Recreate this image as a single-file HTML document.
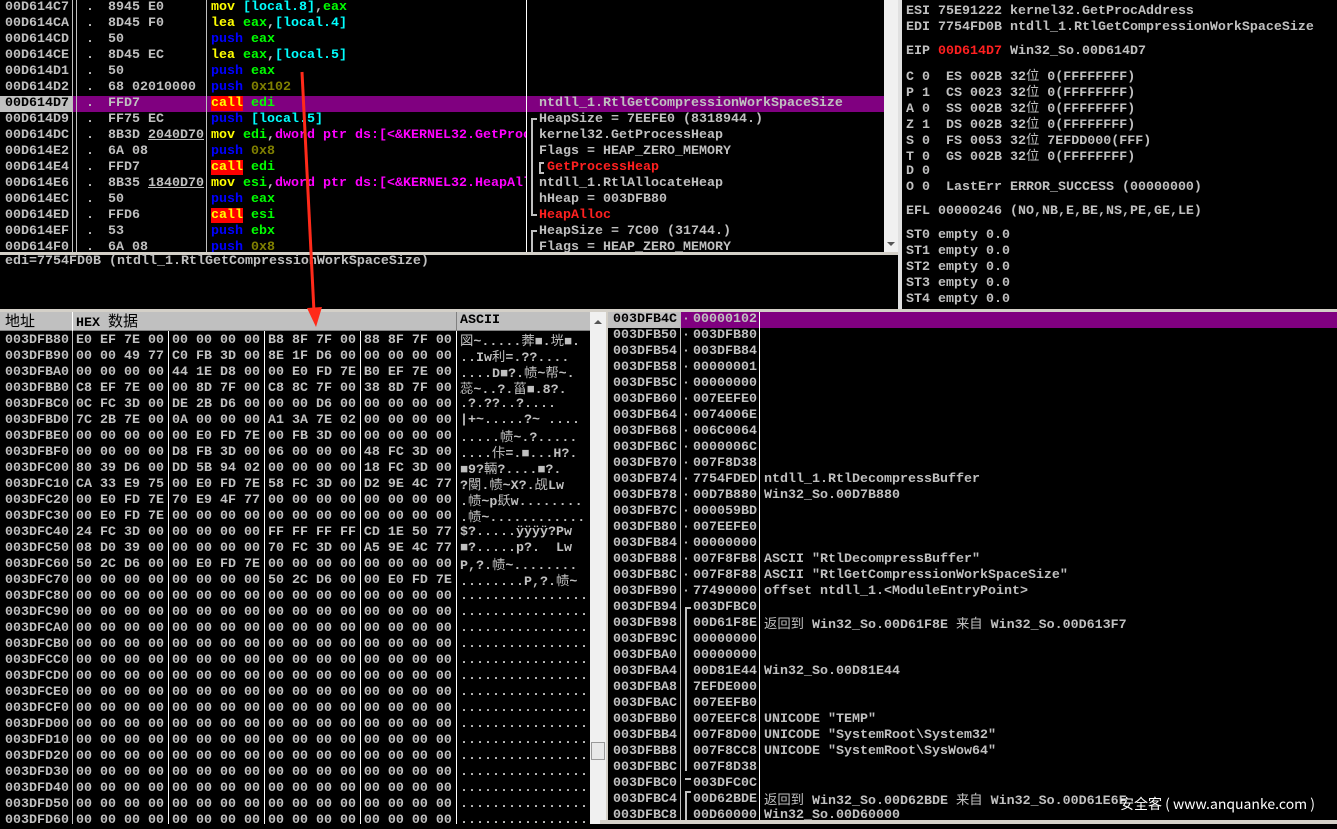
<!DOCTYPE html>
<html><head><meta charset="utf-8"><style>
*{margin:0;padding:0;box-sizing:border-box}
body{width:1337px;height:824px;background:#000;overflow:hidden;position:relative;font-family:"Liberation Mono","Noto Sans CJK SC",monospace;font-weight:bold;font-size:13.33px;color:#c0c0c0}
.a{position:absolute;white-space:pre;line-height:16px}
.a.L{white-space:normal}
.a>div{height:16px;line-height:16px;white-space:pre;overflow:visible}
.v{position:absolute;background:#c0c0c0;width:1px}
.y{color:#ffff00}.b{color:#0000ff}.g{color:#00ff00}.c{color:#00ffff}.o{color:#808000}.m{color:#ff00ff}.rd{color:#ff2020}
.call{background:#ff0000;color:#ffff00}
.cj{font-family:"Noto Sans CJK SC",sans-serif;font-weight:normal;line-height:1}
</style></head><body>

<div class="a" style="left:0;top:96px;width:884px;height:16px;background:#800080"></div>
<div class="a" style="left:0;top:96px;width:72px;height:16px;background:#c0c0c0"></div>
<div class="v" style="left:72px;top:0;height:252px"></div>
<div class="v" style="left:76px;top:0;height:252px"></div>
<div class="v" style="left:206px;top:0;height:252px"></div>
<div class="v" style="left:526px;top:0;height:252px;background:#fff"></div>
<div class="a" style="left:5px;top:0">00D614C7
00D614CA
00D614CD
00D614CE
00D614D1
00D614D2
<span style="color:#000">00D614D7</span>
00D614D9
00D614DC
00D614E2
00D614E4
00D614E6
00D614EC
00D614ED
00D614EF
00D614F0</div>
<div class="a" style="left:86px;top:0">.
.
.
.
.
.
.
.
.
.
.
.
.
.
.
.</div>
<div class="a" style="left:108px;top:0">8945 E0
8D45 F0
50
8D45 EC
50
68 02010000
FFD7
FF75 EC
8B3D <u>2040D70</u>
6A 08
FFD7
8B35 <u>1840D70</u>
50
FFD6
53
6A 08</div>
<div class="a" style="left:211px;top:0;width:315px;overflow:hidden"><span class="y">mov</span> <span class="c">[local.8]</span>,<span class="g">eax</span>
<span class="y">lea</span> <span class="g">eax</span>,<span class="c">[local.4]</span>
<span class="b">push</span> <span class="g">eax</span>
<span class="y">lea</span> <span class="g">eax</span>,<span class="c">[local.5]</span>
<span class="b">push</span> <span class="g">eax</span>
<span class="b">push</span> <span class="o">0x102</span>
<span class="call">call</span> <span class="g">edi</span>
<span class="b">push</span> <span class="c">[local.5]</span>
<span class="y">mov</span> <span class="g">edi</span>,<span class="m">dword ptr ds:[&lt;&amp;KERNEL32.GetProcessHeap</span>
<span class="b">push</span> <span class="o">0x8</span>
<span class="call">call</span> <span class="g">edi</span>
<span class="y">mov</span> <span class="g">esi</span>,<span class="m">dword ptr ds:[&lt;&amp;KERNEL32.HeapAlloc</span>
<span class="b">push</span> <span class="g">eax</span>
<span class="call">call</span> <span class="g">esi</span>
<span class="b">push</span> <span class="g">ebx</span>
<span class="b">push</span> <span class="o">0x8</span></div>
<div class="a" style="left:539px;top:96px">ntdll_1.RtlGetCompressionWorkSpaceSize
HeapSize = 7EEFE0 (8318944.)
kernel32.GetProcessHeap
Flags = HEAP_ZERO_MEMORY
 <span class="rd">GetProcessHeap</span>
ntdll_1.RtlAllocateHeap
hHeap = 003DFB80
<span class="rd">HeapAlloc</span>
HeapSize = 7C00 (31744.)
Flags = HEAP_ZERO_MEMORY</div>
<div class="a" style="left:531px;top:118px;width:6px;height:98px;border-left:2px solid #c0c0c0;border-top:2px solid #c0c0c0;border-bottom:2px solid #c0c0c0"></div>
<div class="a" style="left:539px;top:162px;width:5px;height:12px;border:2px solid #c0c0c0;border-right:none"></div>
<div class="a" style="left:531px;top:230px;width:6px;height:22px;border-left:2px solid #c0c0c0;border-top:2px solid #c0c0c0"></div>
<div class="a" style="left:884px;top:0;width:14px;height:252px;background:#f0f0f0"></div>
<div class="a" style="left:887px;top:242px;width:0;height:0;border-left:4px solid transparent;border-right:4px solid transparent;border-top:4px solid #555"></div>
<div class="a" style="left:0;top:252px;width:900px;height:3px;background:#d4d0c8"></div>
<div class="a" style="left:5px;top:254px">edi=7754FD0B (ntdll_1.RtlGetCompressionWorkSpaceSize)</div>

<div class="a" style="left:898px;top:0;width:4px;height:310px;background:#e0e0e0"></div>
<div class="a" style="left:906px;top:4px">ESI 75E91222 kernel32.GetProcAddress
EDI 7754FD0B ntdll_1.RtlGetCompressionWorkSpaceSize</div>
<div class="a" style="left:906px;top:44px">EIP <span class="rd">00D614D7</span> Win32_So.00D614D7</div>
<div class="a L" style="left:906px;top:68px"><div>C 0  ES 002B 32<span class="cj">位</span> 0(FFFFFFFF)</div><div>P 1  CS 0023 32<span class="cj">位</span> 0(FFFFFFFF)</div><div>A 0  SS 002B 32<span class="cj">位</span> 0(FFFFFFFF)</div><div>Z 1  DS 002B 32<span class="cj">位</span> 0(FFFFFFFF)</div><div>S 0  FS 0053 32<span class="cj">位</span> 7EFDD000(FFF)</div><div>T 0  GS 002B 32<span class="cj">位</span> 0(FFFFFFFF)</div><div>D 0</div><div>O 0  LastErr ERROR_SUCCESS (00000000)</div></div>
<div class="a" style="left:906px;top:204px">EFL 00000246 (NO,NB,E,BE,NS,PE,GE,LE)</div>
<div class="a" style="left:906px;top:228px">ST0 empty 0.0
ST1 empty 0.0
ST2 empty 0.0
ST3 empty 0.0
ST4 empty 0.0</div>

<div class="a" style="left:0;top:309px;width:1337px;height:3px;background:#d4d0c8"></div>

<div class="a" style="left:0;top:312px;width:590px;height:19px;background:#c0c0c0;border-bottom:1px solid #808080"></div>
<div class="a L" style="left:5px;top:313px;color:#000"><div><span class="cj" style="font-size:15px">地址</span></div></div>
<div class="a L" style="left:76px;top:313px;color:#000"><div>HEX <span class="cj" style="font-size:15px">数据</span></div></div>
<div class="a" style="left:460px;top:313px;color:#000">ASCII</div>
<div class="v" style="left:72px;top:312px;height:19px;background:#fff"></div>
<div class="v" style="left:456px;top:312px;height:19px;background:#808080"></div>
<div class="v" style="left:72px;top:331px;height:493px"></div>
<div class="v" style="left:168px;top:331px;height:493px;background:#fff"></div>
<div class="v" style="left:264px;top:331px;height:493px;background:#fff"></div>
<div class="v" style="left:360px;top:331px;height:493px;background:#fff"></div>
<div class="v" style="left:456px;top:331px;height:493px;background:#fff"></div>
<div class="a" style="left:5px;top:333px">003DFB80
003DFB90
003DFBA0
003DFBB0
003DFBC0
003DFBD0
003DFBE0
003DFBF0
003DFC00
003DFC10
003DFC20
003DFC30
003DFC40
003DFC50
003DFC60
003DFC70
003DFC80
003DFC90
003DFCA0
003DFCB0
003DFCC0
003DFCD0
003DFCE0
003DFCF0
003DFD00
003DFD10
003DFD20
003DFD30
003DFD40
003DFD50
003DFD60</div>
<div class="a" style="left:76px;top:333px">E0 EF 7E 00 00 00 00 00 B8 8F 7F 00 88 8F 7F 00
00 00 49 77 C0 FB 3D 00 8E 1F D6 00 00 00 00 00
00 00 00 00 44 1E D8 00 00 E0 FD 7E B0 EF 7E 00
C8 EF 7E 00 00 8D 7F 00 C8 8C 7F 00 38 8D 7F 00
0C FC 3D 00 DE 2B D6 00 00 00 D6 00 00 00 00 00
7C 2B 7E 00 0A 00 00 00 A1 3A 7E 02 00 00 00 00
00 00 00 00 00 E0 FD 7E 00 FB 3D 00 00 00 00 00
00 00 00 00 D8 FB 3D 00 06 00 00 00 48 FC 3D 00
80 39 D6 00 DD 5B 94 02 00 00 00 00 18 FC 3D 00
CA 33 E9 75 00 E0 FD 7E 58 FC 3D 00 D2 9E 4C 77
00 E0 FD 7E 70 E9 4F 77 00 00 00 00 00 00 00 00
00 E0 FD 7E 00 00 00 00 00 00 00 00 00 00 00 00
24 FC 3D 00 00 00 00 00 FF FF FF FF CD 1E 50 77
08 D0 39 00 00 00 00 00 70 FC 3D 00 A5 9E 4C 77
50 2C D6 00 00 E0 FD 7E 00 00 00 00 00 00 00 00
00 00 00 00 00 00 00 00 50 2C D6 00 00 E0 FD 7E
00 00 00 00 00 00 00 00 00 00 00 00 00 00 00 00
00 00 00 00 00 00 00 00 00 00 00 00 00 00 00 00
00 00 00 00 00 00 00 00 00 00 00 00 00 00 00 00
00 00 00 00 00 00 00 00 00 00 00 00 00 00 00 00
00 00 00 00 00 00 00 00 00 00 00 00 00 00 00 00
00 00 00 00 00 00 00 00 00 00 00 00 00 00 00 00
00 00 00 00 00 00 00 00 00 00 00 00 00 00 00 00
00 00 00 00 00 00 00 00 00 00 00 00 00 00 00 00
00 00 00 00 00 00 00 00 00 00 00 00 00 00 00 00
00 00 00 00 00 00 00 00 00 00 00 00 00 00 00 00
00 00 00 00 00 00 00 00 00 00 00 00 00 00 00 00
00 00 00 00 00 00 00 00 00 00 00 00 00 00 00 00
00 00 00 00 00 00 00 00 00 00 00 00 00 00 00 00
00 00 00 00 00 00 00 00 00 00 00 00 00 00 00 00
00 00 00 00 00 00 00 00 00 00 00 00 00 00 00 00</div>
<div class="a L" style="left:460px;top:333px;width:130px;height:491px;overflow:hidden"><div><span class="cj">図</span>~.....<span class="cj">莾</span>■.<span class="cj">垙</span>■.</div><div>..Iw<span class="cj">利</span>=.??....</div><div>....D■?.<span class="cj">帻</span>~<span class="cj">帮</span>~.</div><div><span class="cj">蕊</span>~..?.<span class="cj">菑</span>■.8?.</div><div>.?.??..?....</div><div>|+~.....?~ ....</div><div>.....<span class="cj">帻</span>~.?.....</div><div>....<span class="cj">佧</span>=.■...H?.</div><div>■9?<span class="cj">輛</span>?....■?.</div><div>?<span class="cj">閿</span>.<span class="cj">帻</span>~X?.<span class="cj">觇</span>Lw</div><div>.<span class="cj">帻</span>~p<span class="cj">镺</span>w........</div><div>.<span class="cj">帻</span>~............</div><div>$?.....ÿÿÿÿ?Pw</div><div>■?.....p?.  Lw</div><div>P,?.<span class="cj">帻</span>~........</div><div>........P,?.<span class="cj">帻</span>~</div><div>................</div><div>................</div><div>................</div><div>................</div><div>................</div><div>................</div><div>................</div><div>................</div><div>................</div><div>................</div><div>................</div><div>................</div><div>................</div><div>................</div><div>................</div></div>
<div class="a" style="left:590px;top:312px;width:16px;height:512px;background:#f0f0f0"></div>
<div class="a" style="left:591px;top:742px;width:14px;height:18px;background:#e8e8e8;border:1px solid #999"></div>
<div class="a" style="left:594px;top:320px;width:0;height:0;border-left:4px solid transparent;border-right:4px solid transparent;border-bottom:4px solid #555"></div>

<div class="a" style="left:606px;top:312px;width:2px;height:512px;background:#d4d0c8"></div>
<div class="a" style="left:680px;top:312px;width:657px;height:16px;background:#800080"></div>
<div class="a" style="left:608px;top:312px;width:72px;height:16px;background:#c0c0c0"></div>
<div class="v" style="left:680px;top:312px;height:512px"></div>
<div class="v" style="left:759px;top:312px;height:512px;background:#fff"></div>
<div class="a" style="left:613px;top:312px"><span style="color:#000">003DFB4C</span>
003DFB50
003DFB54
003DFB58
003DFB5C
003DFB60
003DFB64
003DFB68
003DFB6C
003DFB70
003DFB74
003DFB78
003DFB7C
003DFB80
003DFB84
003DFB88
003DFB8C
003DFB90
003DFB94
003DFB98
003DFB9C
003DFBA0
003DFBA4
003DFBA8
003DFBAC
003DFBB0
003DFBB4
003DFBB8
003DFBBC
003DFBC0
003DFBC4
003DFBC8</div>
<div class="a" style="left:682px;top:312px">·
·
·
·
·
·
·
·
·
·
·
·
·
·
·
·
·
·</div>
<div class="a" style="left:693px;top:312px">00000102
003DFB80
003DFB84
00000001
00000000
007EEFE0
0074006E
006C0064
0000006C
007F8D38
7754FDED
00D7B880
000059BD
007EEFE0
00000000
007F8FB8
007F8F88
77490000
003DFBC0
00D61F8E
00000000
00000000
00D81E44
7EFDE000
007EEFB0
007EEFC8
007F8D00
007F8CC8
007F8D38
003DFC0C
00D62BDE
00D60000</div>
<div class="a" style="left:685px;top:607px;width:6px;height:164px;border-left:2px solid #c0c0c0;border-top:2px solid #c0c0c0"></div>
<div class="a" style="left:685px;top:772px;width:6px;height:8px;border-bottom:2px solid #c0c0c0"></div>
<div class="a" style="left:685px;top:791px;width:6px;height:33px;border-left:2px solid #c0c0c0;border-top:2px solid #c0c0c0"></div>
<div class="a L" style="left:764px;top:472px"><div>ntdll_1.RtlDecompressBuffer</div><div>Win32_So.00D7B880</div><div></div><div></div><div></div><div>ASCII "RtlDecompressBuffer"</div><div>ASCII "RtlGetCompressionWorkSpaceSize"</div><div>offset ntdll_1.&lt;ModuleEntryPoint&gt;</div><div></div><div><span class="cj">返回到</span> Win32_So.00D61F8E <span class="cj">来自</span> Win32_So.00D613F7</div><div></div><div></div><div>Win32_So.00D81E44</div><div></div><div></div><div>UNICODE "TEMP"</div><div>UNICODE "SystemRoot\System32"</div><div>UNICODE "SystemRoot\SysWow64"</div><div></div><div></div><div><span class="cj">返回到</span> Win32_So.00D62BDE <span class="cj">来自</span> Win32_So.00D61E6F</div><div>Win32_So.00D60000</div></div>
<div class="a" style="left:600px;top:820px;width:737px;height:4px;background:#d4d0c8"></div>
<div class="a" style="left:1120px;top:796px;color:#fff;font-family:'Noto Sans CJK SC',sans-serif;font-weight:normal;font-size:14px">安全客 ( www.anquanke.com )</div>

<svg class="a" style="left:0;top:0" width="1337" height="824"><line x1="302" y1="72" x2="314" y2="312" stroke="#ff2a1a" stroke-width="3"/><polygon points="307,308 322,307 316,327" fill="#ff2a1a"/></svg>
</body></html>
